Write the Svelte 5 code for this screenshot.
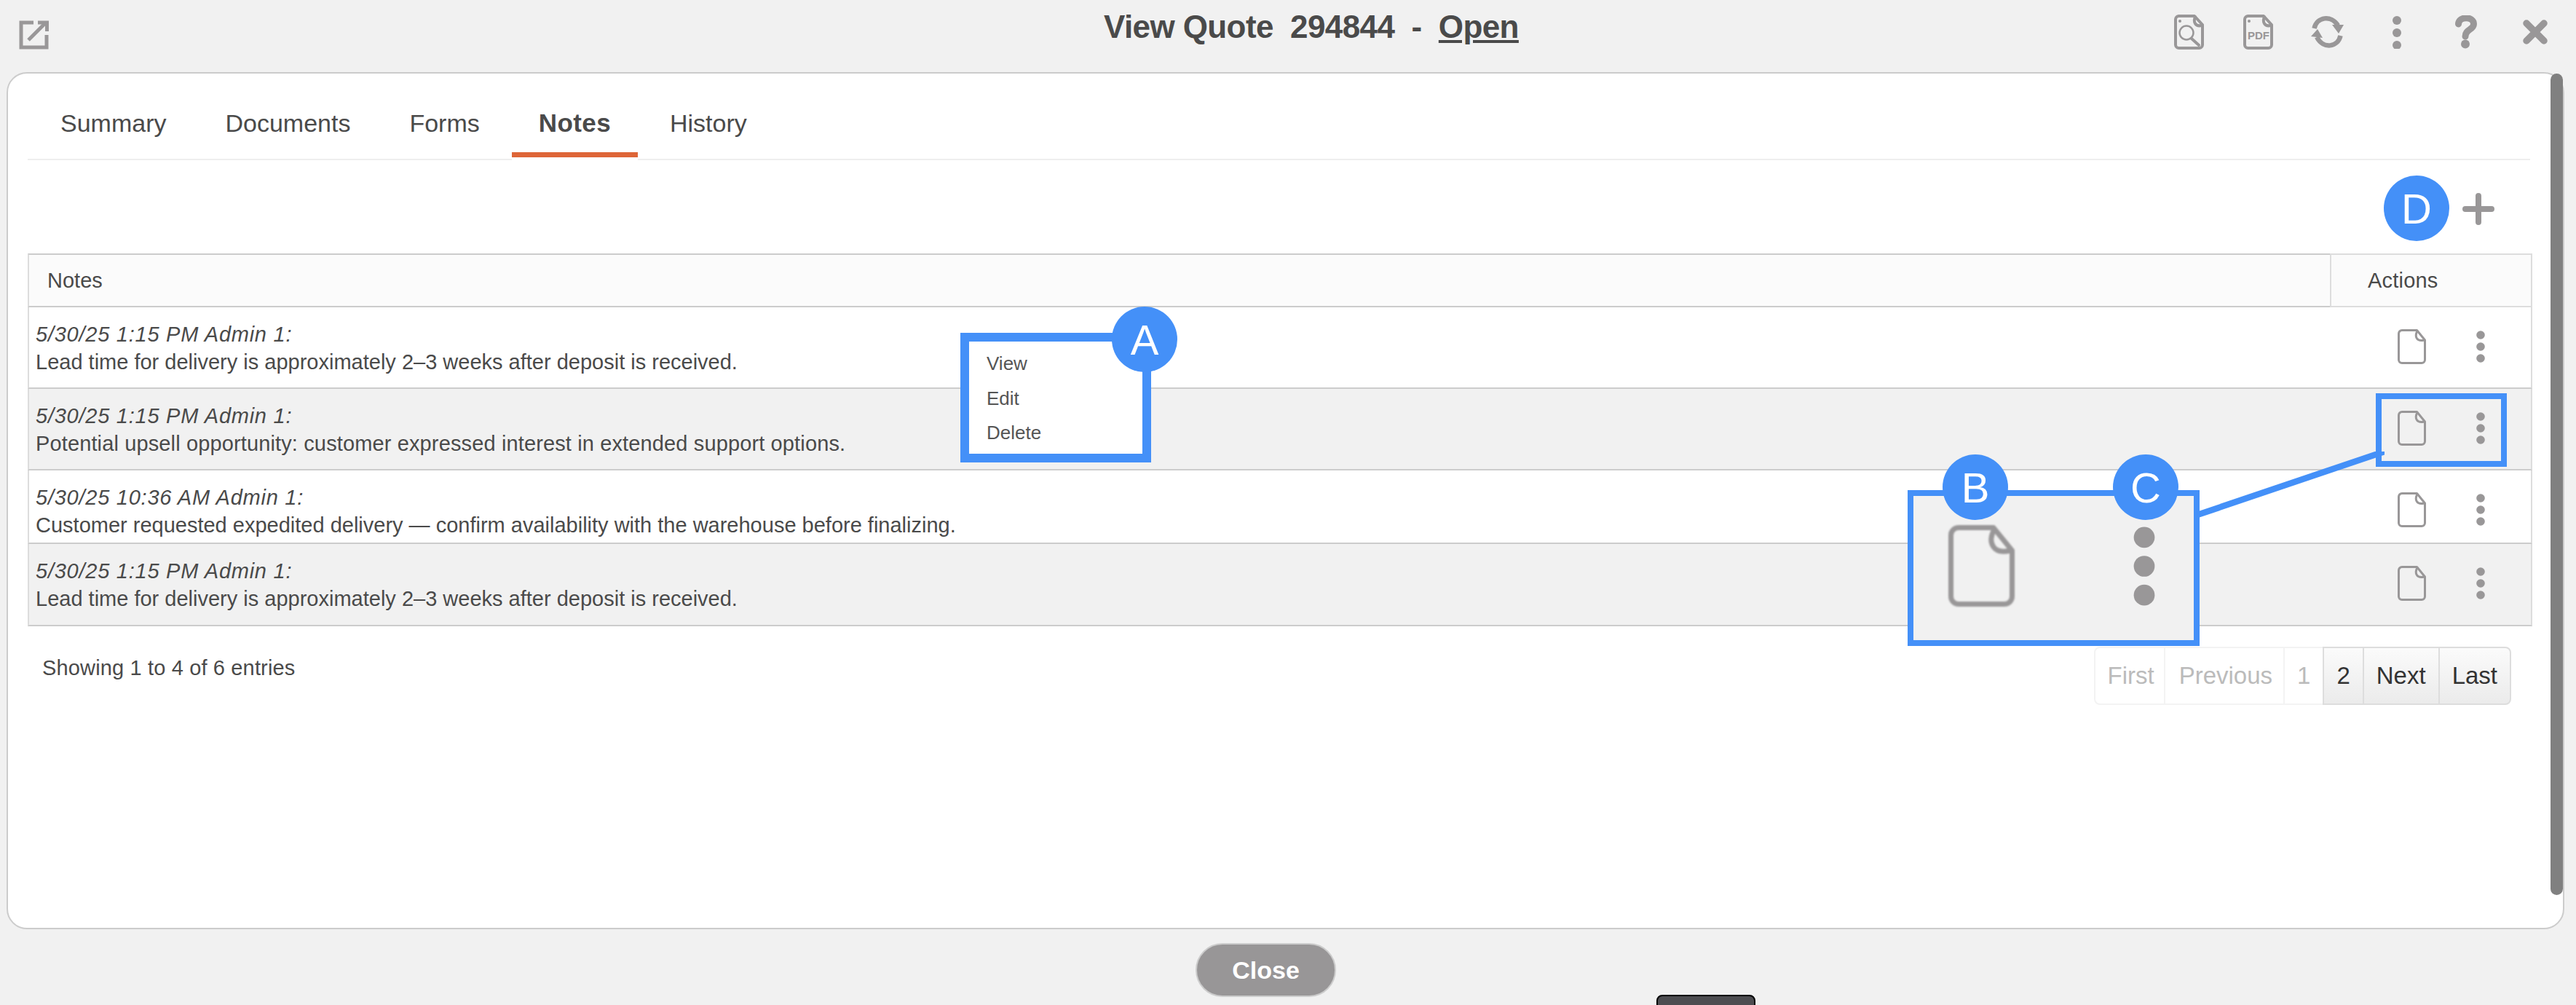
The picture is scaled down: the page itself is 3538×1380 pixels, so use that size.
<script>
  const tabs = ["Summary", "Documents", "Forms", "Notes", "History"];
  const notes = [
    { when: "5/30/25 1:15 PM Admin 1:", text: "Lead time for delivery is approximately 2–3 weeks after deposit is received." },
    { when: "5/30/25 1:15 PM Admin 1:", text: "Potential upsell opportunity: customer expressed interest in extended support options.", wide: true },
    { when: "5/30/25 10:36 AM Admin 1:", text: "Customer requested expedited delivery — confirm availability with the warehouse before finalizing.", short: true },
    { when: "5/30/25 1:15 PM Admin 1:", text: "Lead time for delivery is approximately 2–3 weeks after deposit is received." }
  ];
  const pages = [
    { label: "First", off: true },
    { label: "Previous", off: true },
    { label: "1", off: true },
    { label: "2" },
    { label: "Next" },
    { label: "Last" }
  ];
</script>

{#snippet docIcon()}
  <svg class="doc" viewBox="0 0 39 48">
    <path d="M6 1.5H26.5L37.5 15V42A4.5 4.5 0 0 1 33 46.5H6A4.5 4.5 0 0 1 1.5 42V6A4.5 4.5 0 0 1 6 1.5Z" />
    <path d="M27 2.5C23 10 26 17.500 36.500 15" />
  </svg>
{/snippet}

{#snippet dotsIcon()}
  <svg class="dots" viewBox="0 0 12 44">
    <circle cx="6" cy="6" r="5.800" />
    <circle cx="6" cy="22" r="5.800" />
    <circle cx="6" cy="38" r="5.800" />
  </svg>
{/snippet}

<div class="page">
  <header class="top">
    <svg class="ico open" viewBox="0 0 41 40">
      <path class="line5" d="M20 3H3V37H38V20" />
      <path class="line5" d="M13 27L37 3" />
      <path class="line5" d="M26 3H38.500V15" />
    </svg>
    <h1>{"View Quote  294844  -  "}<u>Open</u></h1>
    <div class="tools">
      <svg class="ico page-ico" viewBox="0 0 41 48">
        <path class="line4" d="M6 2H28L39 14V41.500A4.500 4.500 0 0 1 34.500 46H6.500A4.500 4.500 0 0 1 2 41.500V6.500A4.500 4.500 0 0 1 6.500 2Z" />
        <path class="line4" d="M29 3C26 10 29 17 38 15" />
        <circle class="fill" cx="8" cy="9" r="2" />
        <circle class="line2" cx="17" cy="25" r="9.500" />
        <path class="line4" d="M24 33L34 42" />
      </svg>
      <svg class="ico page-ico" viewBox="0 0 41 48">
        <path class="line4" d="M6 2H28L39 14V41.500A4.500 4.500 0 0 1 34.500 46H6.500A4.500 4.500 0 0 1 2 41.500V6.500A4.500 4.500 0 0 1 6.500 2Z" />
        <path class="line4" d="M29 3C26 10 29 17 38 15" />
        <circle class="fill" cx="8" cy="9" r="2" />
        <text x="6" y="34" class="pdf">PDF</text>
      </svg>
      <svg class="ico sync" viewBox="0 0 46 46">
        <path class="line6" d="M4.500 18C8 2 28 -1 37 14" />
        <path class="line6" d="M40.500 28C37 44 17 47 8 30" />
        <path class="fill" d="M29 13L45 13L38 25Z" />
        <path class="fill" d="M0 29L16 31L9 19Z" />
      </svg>
      <svg class="ico more" viewBox="0 0 12 46">
        <circle class="fill" cx="6" cy="7" r="6" />
        <circle class="fill" cx="6" cy="24" r="6" />
        <circle class="fill" cx="6" cy="41" r="6" />
      </svg>
      <svg class="ico help" viewBox="0 0 30 46">
        <path class="line8" d="M4.500 12C5 1 25.500 1 25.500 12C25.500 20 14 19 14 29" />
        <circle class="fill" cx="14" cy="39.500" r="6" />
      </svg>
      <svg class="ico cross" viewBox="0 0 34 34">
        <path class="line9" d="M5 5L29 29M29 5L5 29" />
      </svg>
    </div>
  </header>

  <section class="panel">
    <nav class="tabs">
      {#each tabs as tab}
        <div class="tab" class:active={tab === "Notes"}>{tab}</div>
      {/each}
    </nav>

    <div class="add">
      <svg class="plus" viewBox="0 0 44 44">
        <path d="M22 4V40M4 22H40" />
      </svg>
    </div>

    <table>
      <thead>
        <tr>
          <th>Notes</th>
          <th class="act-head">Actions</th>
        </tr>
      </thead>
      <tbody>
        {#each notes as note, i}
          <tr class:alt={i % 2 === 1}>
            <td class="note" class:short={note.short}>
              <em>{note.when}</em><br /><span class:wide={note.wide}>{note.text}</span>
            </td>
            <td class="acts">
              <div class="act-row">
                {@render docIcon()}
                {@render dotsIcon()}
              </div>
            </td>
          </tr>
        {/each}
      </tbody>
    </table>

    <div class="foot">
      <div class="count">Showing 1 to 4 of 6 entries</div>
      <div class="pager">
        {#each pages as p}
          <span class="cell" class:off={p.off}>{p.label}</span>
        {/each}
      </div>
    </div>

    <div class="scroll"></div>
  </section>

  <footer class="bottom">
    <button class="close">Close</button>
  </footer>
  <div class="peek"></div>

  <!-- annotations drawn over the screenshot -->
  <svg class="connector" viewBox="0 0 260 100">
    <line x1="0" y1="88" x2="260" y2="0" />
  </svg>
  <div class="box small-box"></div>
  <div class="box big-box">
    <div class="big-doc">{@render docIcon()}</div>
    <div class="big-dots">{@render dotsIcon()}</div>
  </div>
  <div class="box menu">
    <div>View</div>
    <div>Edit</div>
    <div>Delete</div>
  </div>
  <div class="badge a">A</div>
  <div class="badge b">B</div>
  <div class="badge c">C</div>
  <div class="badge d">D</div>
</div>

<style>
  :global(body) {
    margin: 0;
    background: #f1f1f1;
  }

  .page {
    position: relative;
    width: 3538px;
    height: 1380px;
    overflow: hidden;
    background: #f1f1f1;
    color: #484848;
    font-family: "Liberation Sans", Arial, sans-serif;
    display: flex;
    flex-direction: column;
  }

  .top {
    height: 99px;
    flex: none;
    display: flex;
    align-items: flex-start;
    padding-left: 26px;
    box-sizing: border-box;
  }

  .ico {
    display: block;
    flex: none;
  }

  .ico path,
  .ico circle {
    fill: none;
    stroke: #999798;
    stroke-linecap: round;
    stroke-linejoin: round;
  }

  .ico .fill {
    fill: #999798;
    stroke: none;
  }

  .ico .line2 { stroke-width: 2.5; }
  .ico .line4 { stroke-width: 4; }
  .ico .line5 { stroke-width: 5; stroke-linecap: butt; stroke-linejoin: miter; }
  .ico .line6 { stroke-width: 6.500; stroke-linecap: butt; }
  .ico .line8 { stroke-width: 9; }
  .ico .line9 { stroke-width: 9.500; }

  .pdf {
    font: bold 15px "Liberation Sans", Arial, sans-serif;
    fill: #999798;
  }

  .open {
    width: 41px;
    height: 40px;
    margin-top: 28px;
  }

  h1 {
    margin: 12px 0 0 1449px;
    font-size: 44px;
    line-height: 50px;
    font-weight: bold;
    letter-spacing: -0.6px;
    white-space: pre;
    color: #4a4a4a;
  }

  .tools {
    margin-left: auto;
    margin-right: 39px;
    display: flex;
    align-items: flex-start;
  }

  .page-ico {
    width: 41px;
    height: 48px;
    margin: 20px 54px 0 0;
  }

  .sync {
    width: 46px;
    height: 46px;
    margin: 21px 66px 0 -2px;
  }

  .more {
    width: 12px;
    height: 46px;
    margin: 21px 74px 0 0;
  }

  .help {
    width: 30px;
    height: 46px;
    margin: 21px 63px 0 0;
  }

  .cross {
    width: 34px;
    height: 34px;
    margin-top: 27px;
  }

  .panel {
    position: relative;
    flex: none;
    height: 1177px;
    margin: 0 16px 0 9px;
    box-sizing: border-box;
    border: 2px solid #ccc;
    border-radius: 28px;
    background: #fff;
    padding: 48px 42px 0 27px;
  }

  .tabs {
    display: flex;
    gap: 7px;
    padding: 0 3px 2px 8px;
    margin-right: 3px;
    border-bottom: 2px solid #eee;
  }

  .tab {
    padding: 0 37px 20px;
    font-size: 34px;
    line-height: 40px;
    border-bottom: 7px solid transparent;
    color: #4a4a4a;
  }

  .tab.active {
    font-size: 35px;
    letter-spacing: 0.4px;
    font-weight: bold;
    border-bottom-color: #de6537;
    box-shadow: 0 4px 0 #fff;
    position: relative;
  }

  .add {
    height: 128px;
    box-sizing: border-box;
    display: flex;
    justify-content: flex-end;
    padding: 45px 52px 0 0;
  }

  .plus {
    width: 44px;
    height: 44px;
    display: block;
  }

  .plus path {
    fill: none;
    stroke: #999798;
    stroke-width: 8;
    stroke-linecap: round;
  }

  table {
    width: 100%;
    table-layout: fixed;
    border-collapse: separate;
    border-spacing: 0;
    font-size: 29px;
    color: #4a4a4a;
  }

  th {
    font-weight: normal;
    text-align: left;
    background: #fbfbfb;
    padding: 18px 0 18px 25px;
    line-height: 34px;
    border-top: 2px solid #ccc;
    border-bottom: 2px solid #ccc;
    border-left: 2px solid #ddd;
  }

  th.act-head {
    width: 278px;
    box-sizing: border-box;
    padding-left: 50px;
    letter-spacing: 0.2px;
    border-top-color: #ddd;
    border-bottom-color: #ddd;
    border-right: 2px solid #ddd;
  }

  td {
    border-bottom: 2px solid #ccc;
    vertical-align: top;
  }

  .note {
    padding: 18px 0 16px 9px;
    line-height: 38px;
    border-left: 2px solid #ddd;
  }

  .note em {
    letter-spacing: 0.75px;
  }

  .wide {
    letter-spacing: 0.13px;
  }

  .note.short {
    padding-bottom: 5px;
  }

  tr:last-child .note {
    padding-bottom: 17px;
  }

  .acts {
    padding: 30px 0 0 93px;
    border-right: 2px solid #ddd;
  }

  tr.alt td {
    background: #f1f1f1;
  }

  .act-row {
    display: flex;
    align-items: flex-start;
    gap: 69px;
  }

  .doc {
    display: block;
    width: 39px;
    height: 48px;
  }

  .doc path {
    fill: none;
    stroke: #999798;
    stroke-width: 3;
    stroke-linejoin: round;
    stroke-linecap: round;
  }

  .dots {
    display: block;
    width: 12px;
    height: 44px;
    margin-top: 2px;
    fill: #999798;
  }

  .foot {
    display: flex;
    justify-content: space-between;
    align-items: flex-start;
    margin-top: 28px;
    padding: 0 29px 0 20px;
  }

  .count {
    font-size: 29px;
    line-height: 38px;
    padding-top: 10px;
    letter-spacing: 0.15px;
    color: #4a4a4a;
  }

  .pager {
    display: flex;
    height: 80px;
    font-size: 33px;
  }

  .cell {
    box-sizing: border-box;
    display: flex;
    align-items: center;
    padding: 0 17px;
    margin-left: -2px;
    border: 2px solid #ddd;
    background: linear-gradient(#fbfbfb, #ebebeb);
    color: #333;
  }

  .cell.off {
    border-color: #f3f3f3;
    background: #fff;
    color: #bbb;
  }

  .cell:first-child {
    padding: 0 13px 0 17px;
    border-radius: 8px 0 0 8px;
  }

  .cell:nth-child(2) {
    padding: 0 15px 0 19px;
  }

  .cell:last-child {
    border-radius: 0 8px 8px 0;
  }

  .scroll {
    position: absolute;
    top: 0;
    right: 0;
    width: 17px;
    height: 1128px;
    border-radius: 9px;
    background: #808080;
  }

  .bottom {
    flex: none;
    padding: 19px 0 0 1642px;
  }

  .close {
    display: block;
    width: 193px;
    height: 74px;
    box-sizing: border-box;
    border: 2px solid #ccc;
    border-radius: 37px;
    background: #989697;
    color: #fff;
    font: bold 34px "Liberation Sans", Arial, sans-serif;
    padding: 0;
  }

  .peek {
    position: absolute;
    left: 2275px;
    top: 1366px;
    width: 136px;
    height: 20px;
    box-sizing: border-box;
    border: 2px solid #000;
    border-radius: 8px 8px 0 0;
    background: #4d4d51;
  }

  .connector {
    position: absolute;
    left: 3015px;
    top: 620px;
    width: 260px;
    height: 100px;
  }

  .connector line {
    stroke: #4490f8;
    stroke-width: 8.500;
  }

  .box {
    position: absolute;
    box-sizing: border-box;
    border: 8px solid #4490f8;
  }

  .small-box {
    left: 3263px;
    top: 540px;
    width: 180px;
    height: 101px;
  }

  .big-box {
    left: 2620px;
    top: 673px;
    width: 401px;
    height: 214px;
    background: #f1f1f1;
  }

  .big-doc {
    position: absolute;
    left: 47px;
    top: 40px;
    filter: blur(1px);
  }

  .big-doc :global(.doc) {
    width: 93px;
    height: 112px;
  }

  .big-dots {
    position: absolute;
    left: 302px;
    top: 42px;
  }

  .big-dots :global(.dots) {
    width: 30px;
    height: 109px;
    margin: 0;
    filter: blur(0.5px);
  }

  .menu {
    left: 1319px;
    top: 457px;
    width: 262px;
    height: 178px;
    border-width: 12px;
    background: #fff;
    padding: 7px 0 0 24px;
    font-size: 26px;
    line-height: 47.500px;
    color: #555;
  }

  .badge {
    position: absolute;
    width: 90px;
    height: 90px;
    border-radius: 50%;
    background: #4490f8;
    color: #fff;
    font-size: 58px;
    display: flex;
    align-items: center;
    justify-content: center;
  }

  .badge.a { left: 1527px; top: 421px; }
  .badge.b { left: 2668px; top: 624px; }
  .badge.c { left: 2902px; top: 624px; }
  .badge.d { left: 3274px; top: 241px; }
</style>
